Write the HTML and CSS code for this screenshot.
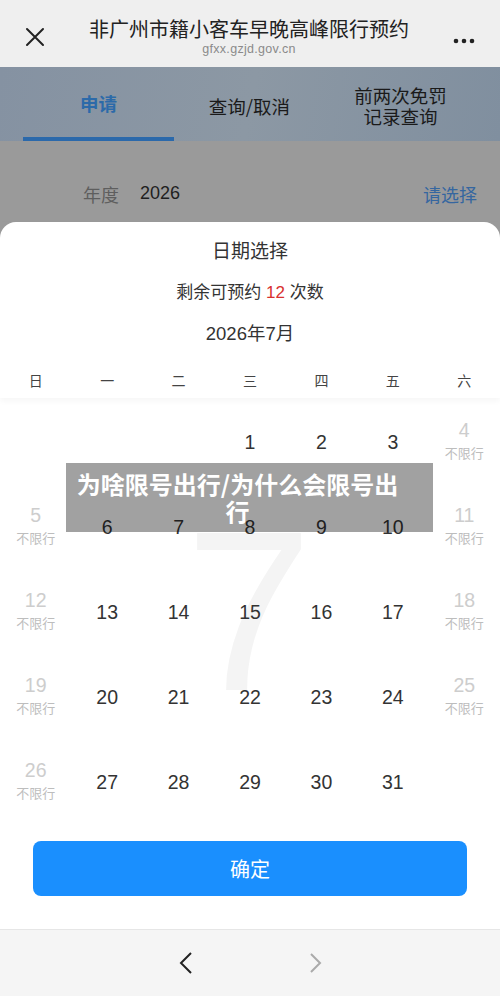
FILE: index.html
```html
<!DOCTYPE html>
<html lang="zh-CN">
<head>
  <meta charset="UTF-8">
  <title>非广州市籍小客车早晚高峰限行预约</title>
  <link rel="stylesheet" href="styles.css">
</head>
<body>

  <!-- 顶部标题栏 -->
  <div class="topbar">
    <svg class="close" width="22" height="22" viewBox="0 0 22 22">
      <path d="M3 3 L19 19 M19 3 L3 19" stroke="#222" stroke-width="2" stroke-linecap="round" fill="none"/>
    </svg>
    <div class="title-box">
      <div class="title">非广州市籍小客车早晚高峰限行预约</div>
      <div class="url">gfxx.gzjd.gov.cn</div>
    </div>
    <svg class="more" width="24" height="8" viewBox="0 0 24 8">
      <circle cx="4" cy="4" r="2.3" fill="#222"/>
      <circle cx="12" cy="4" r="2.3" fill="#222"/>
      <circle cx="20" cy="4" r="2.3" fill="#222"/>
    </svg>
  </div>

  <!-- 标签 -->
  <div class="tabs">
    <div class="tab active">申请</div>
    <div class="tab">查询/取消</div>
    <div class="tab">前两次免罚<br>记录查询</div>
  </div>

  <div class="year-row">
    <span class="label">年度</span>
    <span class="value">2026</span>
    <span class="pick">请选择</span>
  </div>

  <!-- 日期选择弹层 -->
  <div class="sheet">
    <div class="sheet-head">
      <div class="sheet-title">日期选择</div>
      <div class="remain">剩余可预约 <span class="red">12</span> 次数</div>
      <div class="month">2026年7月</div>
      <div class="weekdays">
        <span>日</span><span>一</span><span>二</span><span>三</span><span>四</span><span>五</span><span>六</span>
      </div>
    </div>

    <div class="days">
      <div class="watermark">7</div>

      <div class="day"></div>
      <div class="day"></div>
      <div class="day"></div>
      <div class="day"><b>1</b></div>
      <div class="day"><b>2</b></div>
      <div class="day"><b>3</b></div>
      <div class="day off"><b>4</b><i>不限行</i></div>

      <div class="day off"><b>5</b><i>不限行</i></div>
      <div class="day"><b>6</b></div>
      <div class="day"><b>7</b></div>
      <div class="day"><b>8</b></div>
      <div class="day"><b>9</b></div>
      <div class="day"><b>10</b></div>
      <div class="day off"><b>11</b><i>不限行</i></div>

      <div class="day off"><b>12</b><i>不限行</i></div>
      <div class="day"><b>13</b></div>
      <div class="day"><b>14</b></div>
      <div class="day"><b>15</b></div>
      <div class="day"><b>16</b></div>
      <div class="day"><b>17</b></div>
      <div class="day off"><b>18</b><i>不限行</i></div>

      <div class="day off"><b>19</b><i>不限行</i></div>
      <div class="day"><b>20</b></div>
      <div class="day"><b>21</b></div>
      <div class="day"><b>22</b></div>
      <div class="day"><b>23</b></div>
      <div class="day"><b>24</b></div>
      <div class="day off"><b>25</b><i>不限行</i></div>

      <div class="day off"><b>26</b><i>不限行</i></div>
      <div class="day"><b>27</b></div>
      <div class="day"><b>28</b></div>
      <div class="day"><b>29</b></div>
      <div class="day"><b>30</b></div>
      <div class="day"><b>31</b></div>
      <div class="day"></div>
    </div>

    <div class="btn-wrap">
      <button class="ok-btn">确定</button>
    </div>
  </div>

  <!-- 底部导航 -->
  <div class="bottom-nav">
    <svg width="16" height="24" viewBox="0 0 16 24">
      <polyline points="13,2 3,12 13,22" stroke="#222" stroke-width="2" fill="none"/>
    </svg>
    <svg width="16" height="24" viewBox="0 0 16 24">
      <polyline points="3,3 12,12 3,21" stroke="#aaa" stroke-width="2" fill="none"/>
    </svg>
  </div>

  <!-- 文章标题水印 -->
  <div class="banner">为啥限号出行/为什么会限号出行</div>

</body>
</html>
```

FILE: styles.css
```css
body {
  margin: 0;
  width: 500px;
  height: 996px;
  overflow: hidden;
  position: relative;
  font-family: "Liberation Sans", "Noto Sans CJK SC", sans-serif;
  background: #9a9a9a;
  color: #222;
}

.topbar {
  height: 67px;
  background: #efefef;
  display: flex;
  align-items: center;
  padding: 0 24px 0 24px;
  box-sizing: border-box;
}

.close {
  margin-top: 7px;
}

.title-box {
  flex: 1;
  text-align: center;
  padding-top: 4px;
}

.title {
  font-family: "Noto Sans CJK SC", sans-serif;
  font-size: 20px;
  line-height: 26px;
  color: #222;
}

.url {
  font-size: 12.5px;
  line-height: 14px;
  color: #8a8a8a;
  letter-spacing: 0.3px;
}

.more {
  margin-top: 14px;
}

.tabs {
  height: 74px;
  background: linear-gradient(100deg, #8592a2, #8c98a4 50%, #808f9f);
  display: grid;
  grid-template-columns: repeat(3, 151px);
  padding-left: 23px;
  box-sizing: border-box;
}

.tab {
  display: flex;
  align-items: center;
  justify-content: center;
  text-align: center;
  font-family: "Noto Sans CJK SC", sans-serif;
  font-size: 18.5px;
  line-height: 21px;
  color: #1a1a1a;
  padding-top: 4px;
  box-sizing: border-box;
}

.tab.active {
  color: #2c6aa9;
  font-weight: bold;
  border-bottom: 4px solid #2b69ab;
  padding-top: 2px;
}

.year-row {
  height: 81px;
  display: flex;
  align-items: center;
  padding: 24px 23px 0 83px;
  box-sizing: border-box;
  font-size: 18px;
}

.year-row .label {
  color: #5e5e5e;
}

.year-row .value {
  margin-left: 21px;
  color: #1f1f1f;
}

.year-row .pick {
  margin-left: auto;
  color: #3566a0;
}

.sheet {
  background: white;
  border-radius: 16px 16px 0 0;
  height: 707px;
  display: flex;
  flex-direction: column;
}

.sheet-head {
  text-align: center;
  color: #333;
  padding-top: 16px;
  box-shadow: 0 3px 6px rgba(0,0,0,0.04);
  position: relative;
  z-index: 1;
}

.sheet-title {
  font-size: 19px;
  line-height: 28px;
}

.remain {
  font-size: 17px;
  line-height: 24px;
  margin-top: 15px;
}

.red {
  color: #d8302e;
}

.month {
  font-size: 18.5px;
  line-height: 24px;
  margin-top: 17px;
}

.weekdays {
  display: grid;
  grid-template-columns: repeat(7, 1fr);
  font-size: 14px;
  line-height: 20px;
  color: #444;
  margin-top: 25px;
  padding-bottom: 7px;
}

.days {
  position: relative;
  display: grid;
  grid-template-columns: repeat(7, 1fr);
  grid-auto-rows: 85px;
  margin-top: 1px;
}

.watermark {
  position: absolute;
  left: 0;
  right: 0;
  top: 98px;
  text-align: center;
  font-size: 228px;
  line-height: 228px;
  color: #f4f4f4;
  z-index: 0;
  padding-right: 2px;
}

.day {
  position: relative;
  z-index: 1;
  display: flex;
  flex-direction: column;
  align-items: center;
  justify-content: center;
}

.day b {
  font-weight: normal;
  font-size: 19.5px;
  line-height: 24px;
  color: #333;
}

.day i {
  font-style: normal;
  font-size: 13px;
  line-height: 18px;
  color: #bdbdbd;
  margin-top: 3px;
}

.day.off b {
  color: #cdcdcd;
  margin-top: -2px;
}

.btn-wrap {
  padding: 17px 33px 0 33px;
}

.ok-btn {
  width: 100%;
  height: 55px;
  border: none;
  border-radius: 8px;
  background: #1a8ffe;
  color: white;
  font-family: "Noto Sans CJK SC", sans-serif;
  font-size: 20px;
}

.bottom-nav {
  height: 67px;
  background: #f5f5f5;
  border-top: 1px solid #e6e6e6;
  box-sizing: border-box;
  display: flex;
  align-items: center;
  justify-content: center;
  gap: 114px;
  padding-left: 2px;
}

.banner {
  position: absolute;
  left: 66px;
  top: 463px;
  width: 367px;
  height: 69px;
  box-sizing: border-box;
  padding: 7px 30px 0 6px;
  background: rgba(0,0,0,0.37);
  color: white;
  font-family: "Noto Sans CJK SC", sans-serif;
  font-weight: bold;
  font-size: 24px;
  line-height: 27px;
  text-align: center;
  z-index: 5;
}
```
